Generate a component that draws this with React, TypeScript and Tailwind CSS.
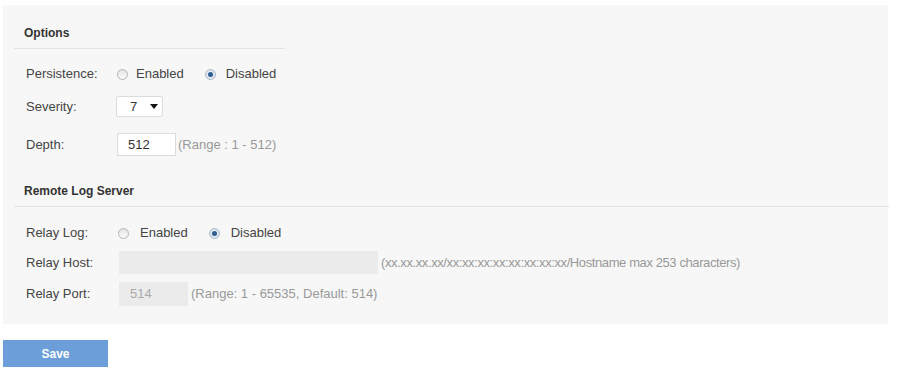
import React from "react";

function Radio({ checked }: { checked: boolean }) {
  return checked ? (
    <span className="inline-flex h-[11px] w-[11px] items-center justify-center rounded-full border border-[#a9b8c8] bg-[#dfe8f1]">
      <span className="h-[5px] w-[5px] rounded-full bg-[#2c5f8f]" />
    </span>
  ) : (
    <span className="inline-block h-[11px] w-[11px] rounded-full border border-[#b5b5b5] bg-gradient-to-b from-[#e4e4e4] to-[#fafafa]" />
  );
}

export default function App() {
  const font = { fontFamily: '"Liberation Sans", Arial, sans-serif' };
  return (
    <div className="min-h-[373px] w-[898px] bg-white pl-[3px] pt-[5px] text-[13px] text-[#444]" style={font}>
      <div className="w-[885px] bg-[#f7f7f7] pb-[18px]">
        {/* Options */}
        <div className="ml-[11px] w-[271px] border-b border-[#e3e3e3] pl-[10px] pt-[20px] pb-[7px]">
          <div className="h-[16px] text-[12px] font-bold leading-[16px] text-[#333]">Options</div>
        </div>
        <div className="mt-[14px] flex h-[22px] items-center pl-[23px]">
          <div className="w-[91px] shrink-0">Persistence:</div>
          <label className="flex items-center">
            <Radio checked={false} />
            <span className="ml-[8px]">Enabled</span>
          </label>
          <label className="ml-[21px] flex items-center">
            <Radio checked={true} />
            <span className="ml-[10px]">Disabled</span>
          </label>
        </div>
        <div className="mt-[11px] flex h-[21px] items-center pl-[23px]">
          <div className="w-[90px] shrink-0">Severity:</div>
          <div className="flex h-[21px] w-[47px] items-center rounded-[2px] border border-[#dcdcdc] bg-white pl-[13px]">
            <span className="text-[#333]">7</span>
            <svg className="ml-[13px]" width="8" height="5" viewBox="0 0 8 5">
              <path d="M0 0 H8 L4 5 Z" fill="#111" />
            </svg>
          </div>
        </div>
        <div className="mt-[16px] flex h-[23px] items-center pl-[23px]">
          <div className="w-[91px] shrink-0">Depth:</div>
          <div className="flex h-[23px] w-[59px] items-center border border-[#dcdcdc] bg-white pl-[10px] text-[#333]">512</div>
          <span className="ml-[2px] text-[#999]">(Range : 1 - 512)</span>
        </div>

        {/* Remote Log Server */}
        <div className="ml-[11px] mt-[27px] w-[875px] border-b border-[#e3e3e3] pl-[10px] pb-[7px]">
          <div className="h-[16px] text-[12px] font-bold leading-[16px] text-[#333]">Remote Log Server</div>
        </div>
        <div className="mt-[15px] flex h-[22px] items-center pl-[23px]">
          <div className="w-[92px] shrink-0">Relay Log:</div>
          <label className="flex items-center">
            <Radio checked={false} />
            <span className="ml-[11px]">Enabled</span>
          </label>
          <label className="ml-[21px] flex items-center">
            <Radio checked={true} />
            <span className="ml-[11px]">Disabled</span>
          </label>
        </div>
        <div className="mt-[7px] flex h-[23px] items-center pl-[23px]">
          <div className="w-[93px] shrink-0">Relay Host:</div>
          <div className="h-[23px] w-[259px] bg-[#ebebeb]" />
          <span className="ml-[3px] tracking-[-0.4px] text-[#999]">(xx.xx.xx.xx/xx:xx:xx:xx:xx:xx:xx:xx/Hostname max 253 characters)</span>
        </div>
        <div className="mt-[8px] flex h-[24px] items-center pl-[23px]">
          <div className="w-[93px] shrink-0">Relay Port:</div>
          <div className="flex h-[24px] w-[69px] items-center bg-[#ebebeb] pl-[11px] text-[#aaa]">514</div>
          <span className="ml-[3px] text-[#999]">(Range: 1 - 65535, Default: 514)</span>
        </div>
      </div>
      <button className="mt-[16px] flex h-[27px] w-[105px] items-center justify-center bg-[#6c9fd9] text-[12px] font-bold text-white">
        Save
      </button>
    </div>
  );
}
